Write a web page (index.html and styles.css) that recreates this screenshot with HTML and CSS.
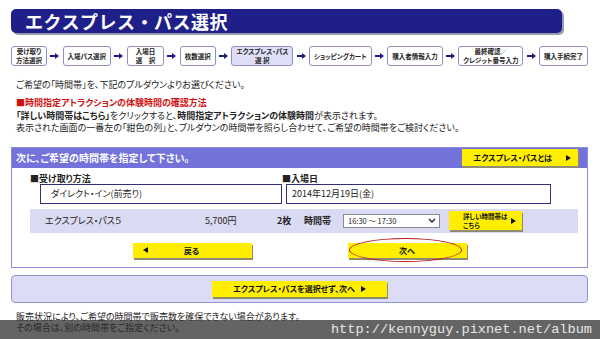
FILE: index.html
```html
<!DOCTYPE html>
<html lang="ja">
<head>
  <meta charset="UTF-8" />
  <meta name="viewport" content="width=device-width, initial-scale=1" />
  <title>エクスプレス・パス選択</title>
  <link rel="stylesheet" href="styles.css">
</head>
<body>
  <div class="page">
    <h1 class="title">エクスプレス・パス選択</h1>

    <div class="steps">
      <div class="step">受け取り<br>方法選択</div>
      <svg class="arrow" width="9" height="6" viewBox="0 0 9 6"><path d="M0 3h6" stroke="#1c1c80" stroke-width="2"/><polygon points="5,0 9,3 5,6" fill="#1c1c80"/></svg>
      <div class="step">入場パス選択</div>
      <svg class="arrow" width="9" height="6" viewBox="0 0 9 6"><path d="M0 3h6" stroke="#1c1c80" stroke-width="2"/><polygon points="5,0 9,3 5,6" fill="#1c1c80"/></svg>
      <div class="step step-wide">入場日<br>選　択</div>
      <svg class="arrow" width="9" height="6" viewBox="0 0 9 6"><path d="M0 3h6" stroke="#1c1c80" stroke-width="2"/><polygon points="5,0 9,3 5,6" fill="#1c1c80"/></svg>
      <div class="step">枚数選択</div>
      <svg class="arrow" width="9" height="6" viewBox="0 0 9 6"><path d="M0 3h6" stroke="#1c1c80" stroke-width="2"/><polygon points="5,0 9,3 5,6" fill="#1c1c80"/></svg>
      <div class="step step-current">エクスプレス・パス<br>選 択</div>
      <svg class="arrow" width="9" height="6" viewBox="0 0 9 6"><path d="M0 3h6" stroke="#1c1c80" stroke-width="2"/><polygon points="5,0 9,3 5,6" fill="#1c1c80"/></svg>
      <div class="step">ショッピングカート</div>
      <svg class="arrow" width="9" height="6" viewBox="0 0 9 6"><path d="M0 3h6" stroke="#1c1c80" stroke-width="2"/><polygon points="5,0 9,3 5,6" fill="#1c1c80"/></svg>
      <div class="step">購入者情報入力</div>
      <svg class="arrow" width="9" height="6" viewBox="0 0 9 6"><path d="M0 3h6" stroke="#1c1c80" stroke-width="2"/><polygon points="5,0 9,3 5,6" fill="#1c1c80"/></svg>
      <div class="step">最終確認／<br>クレジット番号入力</div>
      <svg class="arrow" width="9" height="6" viewBox="0 0 9 6"><path d="M0 3h6" stroke="#1c1c80" stroke-width="2"/><polygon points="5,0 9,3 5,6" fill="#1c1c80"/></svg>
      <div class="step">購入手続完了</div>
    </div>

    <p class="lead">ご希望の「時間帯」を、下記のプルダウンよりお選びください。</p>

    <div class="howto">
      <p class="howto-title">■時間指定アトラクションの体験時間の確認方法</p>
      <p><b>「詳しい時間帯はこちら」</b>をクリックすると、<b>時間指定アトラクションの体験時間</b>が表示されます。</p>
      <p>表示された画面の一番左の「紺色の列」と、プルダウンの時間帯を照らし合わせて、ご希望の時間帯をご検討ください。</p>
    </div>

    <div class="panel">
      <div class="panel-head">
        <span>次に、ご希望の時間帯を指定して下さい。</span>
        <a class="ybtn ybtn-about">エクスプレス・パスとは <span class="tri"></span></a>
      </div>

      <div class="fields">
        <div class="field">
          <div class="field-label">■受け取り方法</div>
          <div class="field-box">ダイレクト・イン(前売り)</div>
        </div>
        <div class="field field-date">
          <div class="field-label">■入場日</div>
          <div class="field-box">2014年12月19日(金)</div>
        </div>
      </div>

      <div class="item-row">
        <span class="item-name">エクスプレス・パス５</span>
        <span class="item-price">5,700円</span>
        <span class="item-qty">2枚</span>
        <span class="item-time">時間帯</span>
        <div class="select">
          <span>16:30 〜 17:30</span>
          <svg width="8" height="5" viewBox="0 0 8 5"><path d="M1 1l3 3 3-3" fill="none" stroke="#222" stroke-width="1.4"/></svg>
        </div>
        <a class="ybtn ybtn-detail"><span>詳しい時間帯は<br>こちら</span><span class="tri"></span></a>
      </div>

      <div class="actions">
        <a class="ybtn ybtn-nav"><span class="tri tri-left"></span><span class="nav-label">戻る</span><span></span></a>
        <a class="ybtn ybtn-nav ybtn-next">次へ<span class="ring"></span></a>
      </div>
    </div>

    <div class="skip-panel">
      <a class="ybtn ybtn-skip">エクスプレス・パスを選択せず、次へ <span class="tri"></span></a>
    </div>

    <p class="note">販売状況により、ご希望の時間帯で販売数を確保できない場合があります。<br>その場合は、別の時間帯をご指定ください。</p>
  </div>

  <div class="watermark">http://kennyguy.pixnet.net/album</div>
</body>
</html>
```

FILE: styles.css
```css
body {
  margin: 0;
  background: #fff;
  color: #222;
  font-family: "Noto Sans CJK JP", "Noto Sans", sans-serif;
  font-feature-settings: "palt";
}
p {
  margin: 0;
}
.page {
  width: 600px;
  height: 339px;
  padding: 9px 12px 0 11px;
  box-sizing: border-box;
  overflow: hidden;
}
.title {
  width: 551px;
  height: 24px;
  margin: 0;
  padding-left: 14px;
  box-sizing: border-box;
  background: #1f1f8a;
  border-radius: 5px;
  box-shadow: 2px 2px 0 #9a9aa8;
  color: #fff;
  font-size: 18px;
  font-weight: bold;
  line-height: 24px;
  font-feature-settings: normal;
  letter-spacing: 0.5px;
}
.steps {
  display: flex;
  align-items: center;
  justify-content: space-between;
  margin-top: 13px;
  height: 20px;
}
.step {
  height: 20px;
  padding: 0 4px;
  box-sizing: border-box;
  display: flex;
  align-items: center;
  justify-content: center;
  text-align: center;
  border: 1px solid #8e8ec6;
  border-radius: 3px;
  background: #fff;
  font-size: 6.5px;
  font-weight: bold;
  line-height: 9px;
  white-space: nowrap;
}
.step-wide {
  padding: 0 8px;
}
.step-current {
  background: #dedef6;
}
.arrow {
  flex: none;
}
.lead {
  margin: 13px 0 0 5px;
  font-size: 9px;
  line-height: 12px;
}
.howto {
  margin: 6px 0 0 5px;
  font-size: 9px;
  line-height: 12.5px;
}
.howto-title {
  color: #d01010;
  font-weight: bold;
}
.panel {
  margin-top: 12px;
  width: 577px;
  border: 1px solid #8a8ad6;
  box-sizing: border-box;
  padding-bottom: 9px;
}
.panel-head {
  height: 20px;
  background: #7272da;
  display: flex;
  align-items: center;
  justify-content: space-between;
  padding: 0 9px 0 4px;
  color: #fff;
  font-size: 10px;
  font-weight: bold;
}
.ybtn {
  display: flex;
  align-items: center;
  background: #ffee00;
  box-shadow: 1px 2px 0 #8e8c70;
  color: #111;
  font-weight: bold;
  text-decoration: none;
  white-space: nowrap;
}
.tri {
  display: inline-block;
  width: 0;
  height: 0;
  border-left: 5px solid #111;
  border-top: 3px solid transparent;
  border-bottom: 3px solid transparent;
}
.tri-left {
  border-left: none;
  border-right: 5px solid #111;
}
.ybtn-about {
  width: 116px;
  height: 17px;
  justify-content: flex-end;
  gap: 14px;
  padding-right: 7px;
  box-sizing: border-box;
  font-size: 8px;
}
.fields {
  display: grid;
  grid-template-columns: 252px 270px;
  padding: 5px 0 0 18px;
}
.field-label {
  font-size: 9px;
  font-weight: bold;
  line-height: 11px;
}
.field-box {
  height: 20px;
  margin-left: 10px;
  padding-left: 10px;
  box-sizing: border-box;
  border: 1px solid #30307e;
  font-size: 9px;
  line-height: 18px;
}
.field-date .field-box {
  margin-left: 4px;
  width: 265px;
  padding-left: 5px;
}
.item-row {
  display: flex;
  align-items: center;
  height: 24px;
  margin: 5px 9px 0 18px;
  padding-left: 15px;
  background: #dadaf2;
  font-size: 9px;
}
.item-name {
  width: 160px;
}
.item-price {
  width: 72px;
}
.item-qty {
  width: 27px;
  font-weight: bold;
}
.item-time {
  width: 39px;
  font-weight: bold;
}
.select {
  width: 97px;
  height: 14px;
  box-sizing: border-box;
  display: flex;
  align-items: center;
  justify-content: space-between;
  padding: 0 3px 0 4px;
  border: 1px solid #8a8a8a;
  background: #fff;
  font-size: 7.5px;
}
.ybtn-detail {
  margin-left: 9px;
  width: 73px;
  height: 19px;
  box-sizing: border-box;
  padding: 0 6px 0 14px;
  justify-content: space-between;
  font-size: 6.5px;
  line-height: 8.5px;
}
.actions {
  display: flex;
  justify-content: center;
  gap: 96px;
  margin-top: 10px;
}
.ybtn-nav {
  width: 119px;
  height: 15px;
  box-sizing: border-box;
  justify-content: space-between;
  padding: 0 10px;
  font-size: 8px;
}
.nav-label {
  margin-left: -6px;
}
.ybtn-next {
  position: relative;
  justify-content: center;
}
.ring {
  position: absolute;
  left: 1px;
  top: -5px;
  width: 113px;
  height: 24px;
  box-sizing: border-box;
  border: 1.5px solid #c01818;
  border-radius: 50%;
}
.skip-panel {
  margin-top: 7px;
  width: 577px;
  height: 28px;
  box-sizing: border-box;
  border: 1px solid #9494d4;
  border-radius: 4px;
  background: #dcdcf6;
  display: flex;
  align-items: center;
  justify-content: center;
}
.ybtn-skip {
  width: 175px;
  height: 16px;
  box-sizing: border-box;
  justify-content: center;
  gap: 6px;
  font-size: 8px;
}
.note {
  margin: 8px 0 0 5px;
  font-size: 9px;
  line-height: 11px;
}
.watermark {
  position: absolute;
  left: 0;
  top: 320px;
  width: 600px;
  height: 19px;
  box-sizing: border-box;
  padding-right: 8px;
  background: rgba(40, 40, 40, 0.72);
  color: #e6e6e6;
  font-family: "Liberation Mono", "DejaVu Sans Mono", monospace;
  font-size: 13.6px;
  line-height: 19px;
  text-align: right;
}
```
